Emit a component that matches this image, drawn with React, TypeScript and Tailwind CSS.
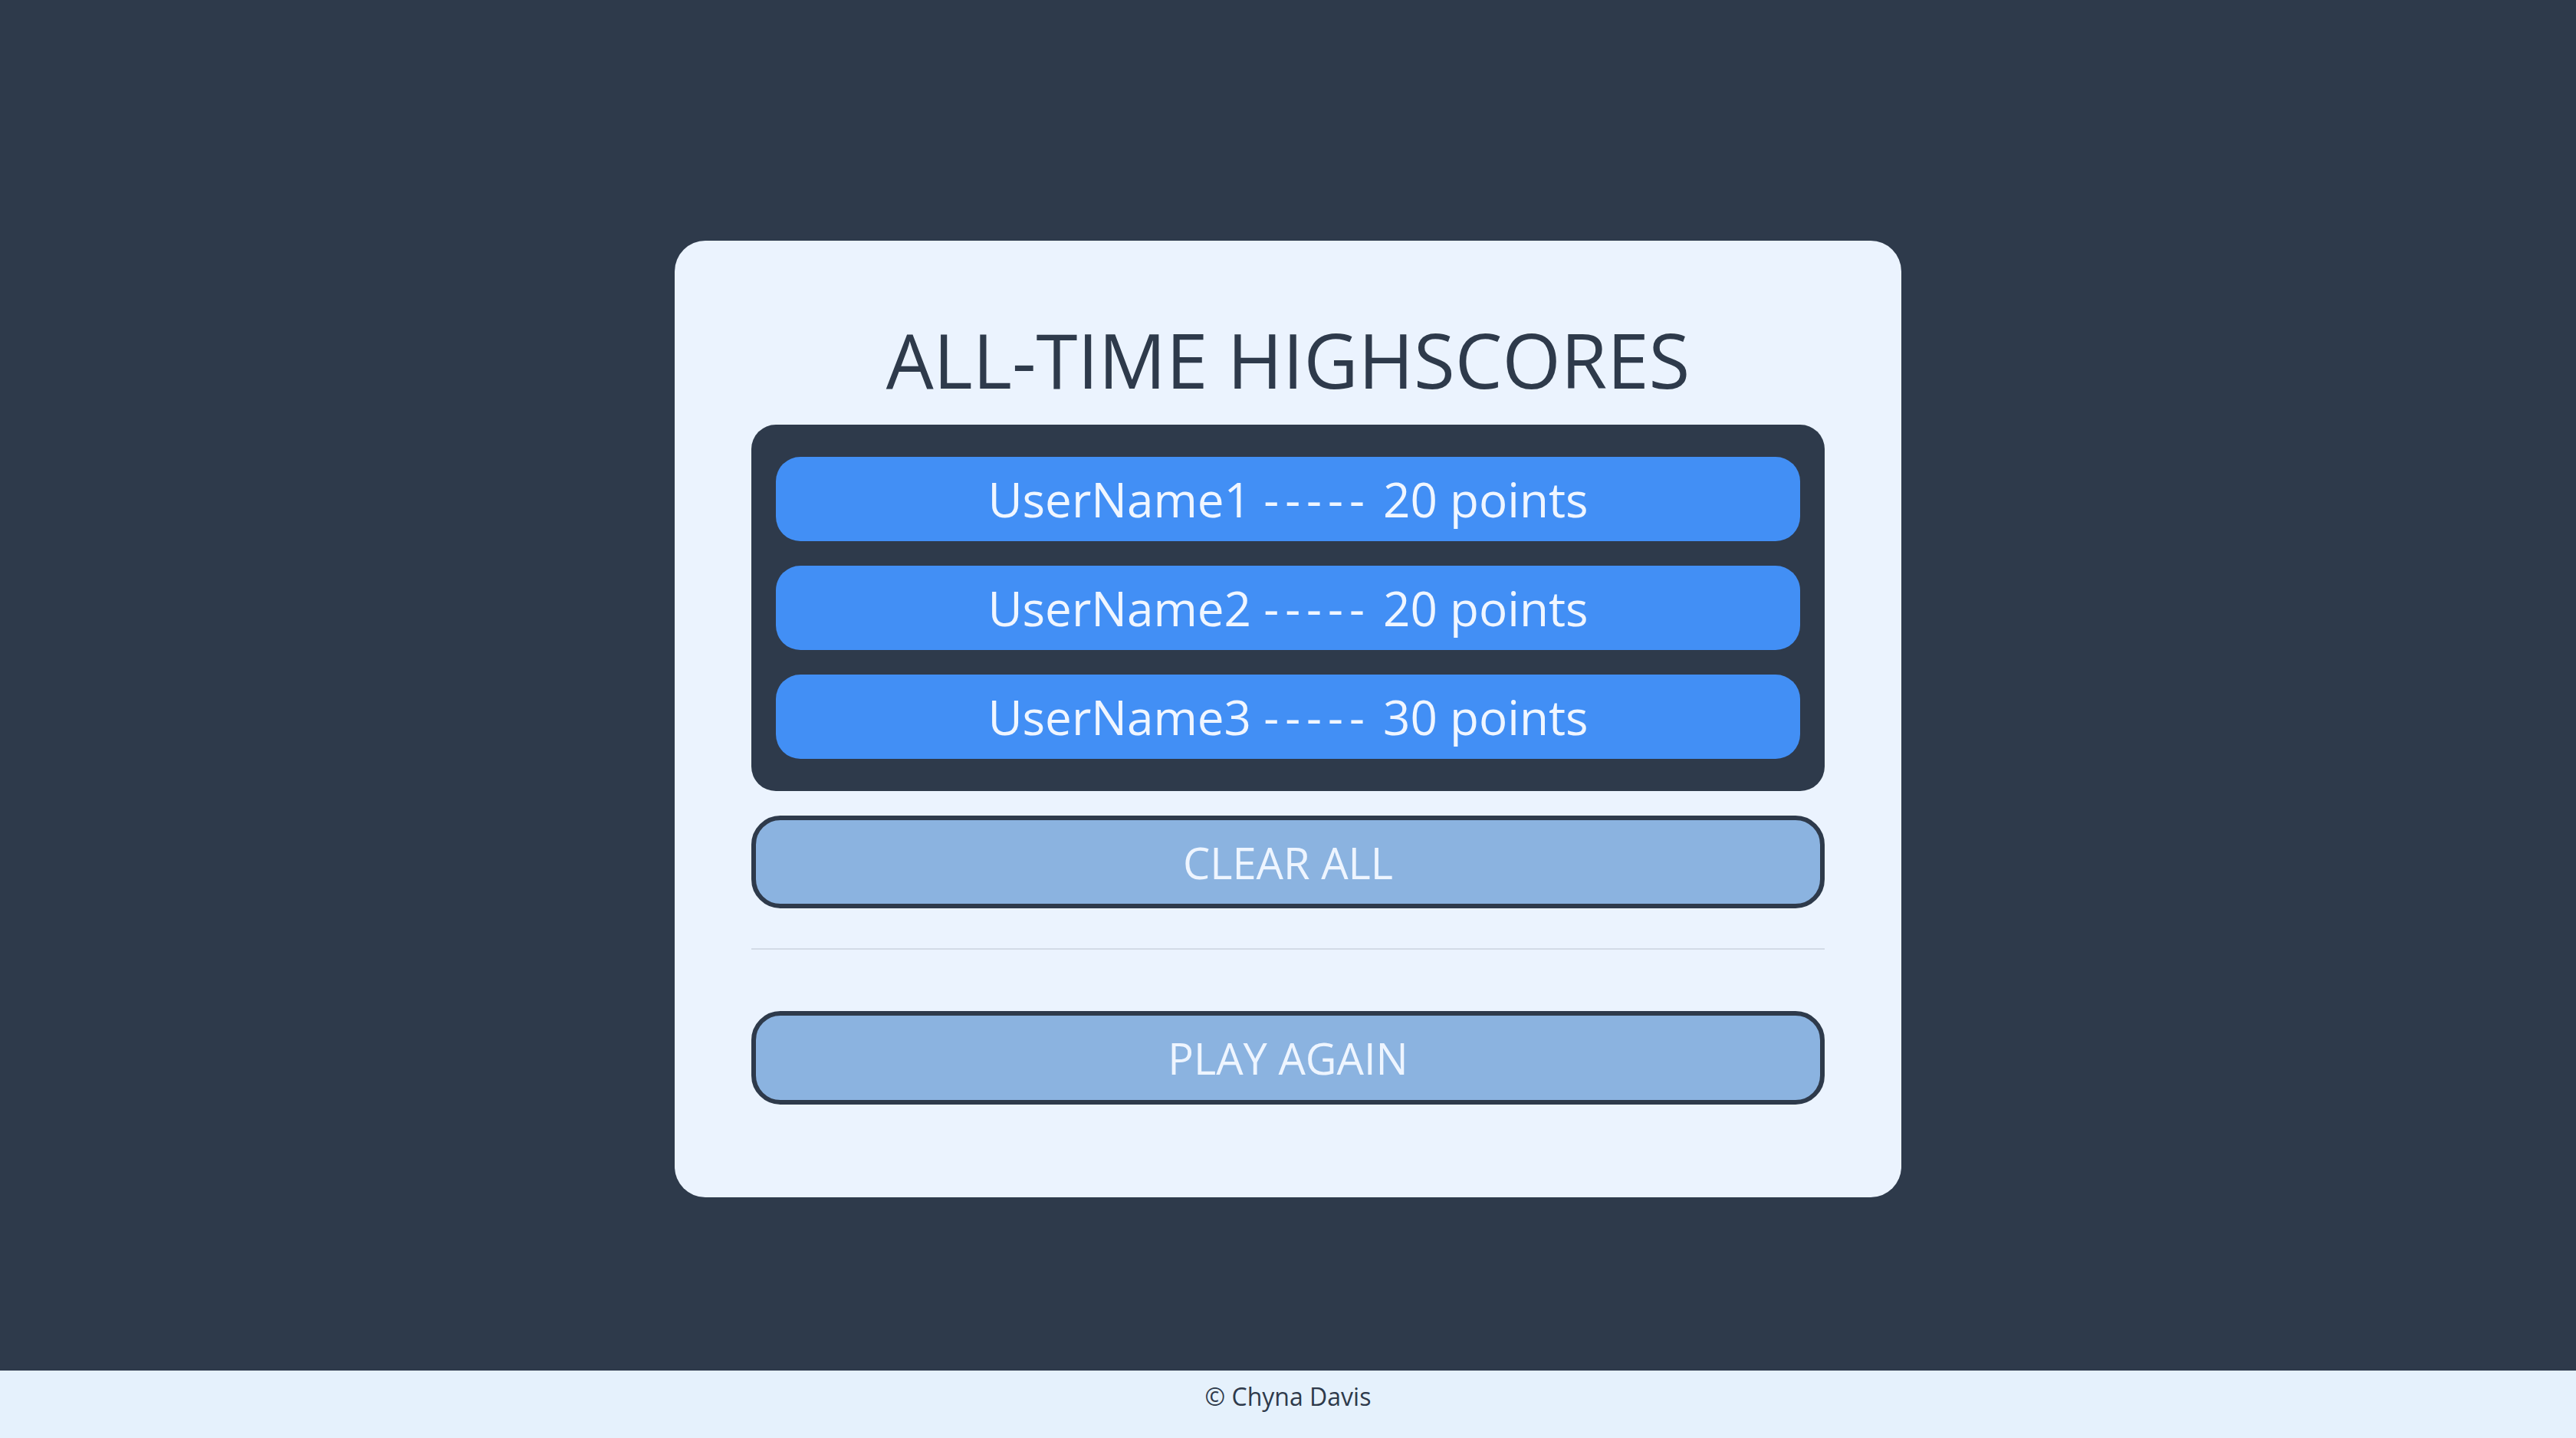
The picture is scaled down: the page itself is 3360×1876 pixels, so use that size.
import React from "react";

const scores = [
  { name: "UserName1", points: 20 },
  { name: "UserName2", points: 20 },
  { name: "UserName3", points: 30 },
];

export default function App() {
  return (
    <div
      className="flex h-screen flex-col bg-[#2e3a4b]"
      style={{ fontFamily: '"Open Sans", "Noto Sans", sans-serif' }}
    >
      <main className="flex flex-1 justify-center pt-[314px]">
        <div className="flex h-[1248px] w-[1600px] flex-col rounded-[40px] bg-[#ebf3fe] px-[100px] pt-[85px]">
          <h1 className="mb-[15px] text-center text-[98px] font-normal leading-[140px] text-[#2e3a4b]">
            ALL-TIME HIGHSCORES
          </h1>
          <ul className="flex flex-col gap-[32px] rounded-[32px] bg-[#2e3a4b] px-[32px] py-[42px]">
            {scores.map((s) => (
              <li
                key={s.name}
                className="flex h-[110px] items-center justify-center whitespace-pre rounded-[32px] bg-[#428ff5] text-[62px] leading-none text-[#f0f6ff]"
              >
                <span>{s.name} </span>
                <span className="tracking-[8px]">-----</span>
                <span> {s.points} points</span>
              </li>
            ))}
          </ul>
          <button className="mt-[32px] flex h-[121px] items-center justify-center rounded-[38px] border-[6px] border-[#2e3a4b] bg-[#8bb3e0] text-[56px] leading-none text-[#eef5ff]">
            CLEAR ALL
          </button>
          <hr className="mt-[52px] border-0 border-t-2 border-[#d3dbe7]" />
          <button className="mt-[80px] flex h-[122px] items-center justify-center rounded-[38px] border-[6px] border-[#2e3a4b] bg-[#8bb3e0] text-[56px] leading-none text-[#eef5ff]">
            PLAY AGAIN
          </button>
        </div>
      </main>
      <footer className="flex h-[88px] items-start justify-center bg-[#e5f1fc] pt-[10px] text-[32px] text-[#2e3a4b]">
        © Chyna Davis
      </footer>
    </div>
  );
}
